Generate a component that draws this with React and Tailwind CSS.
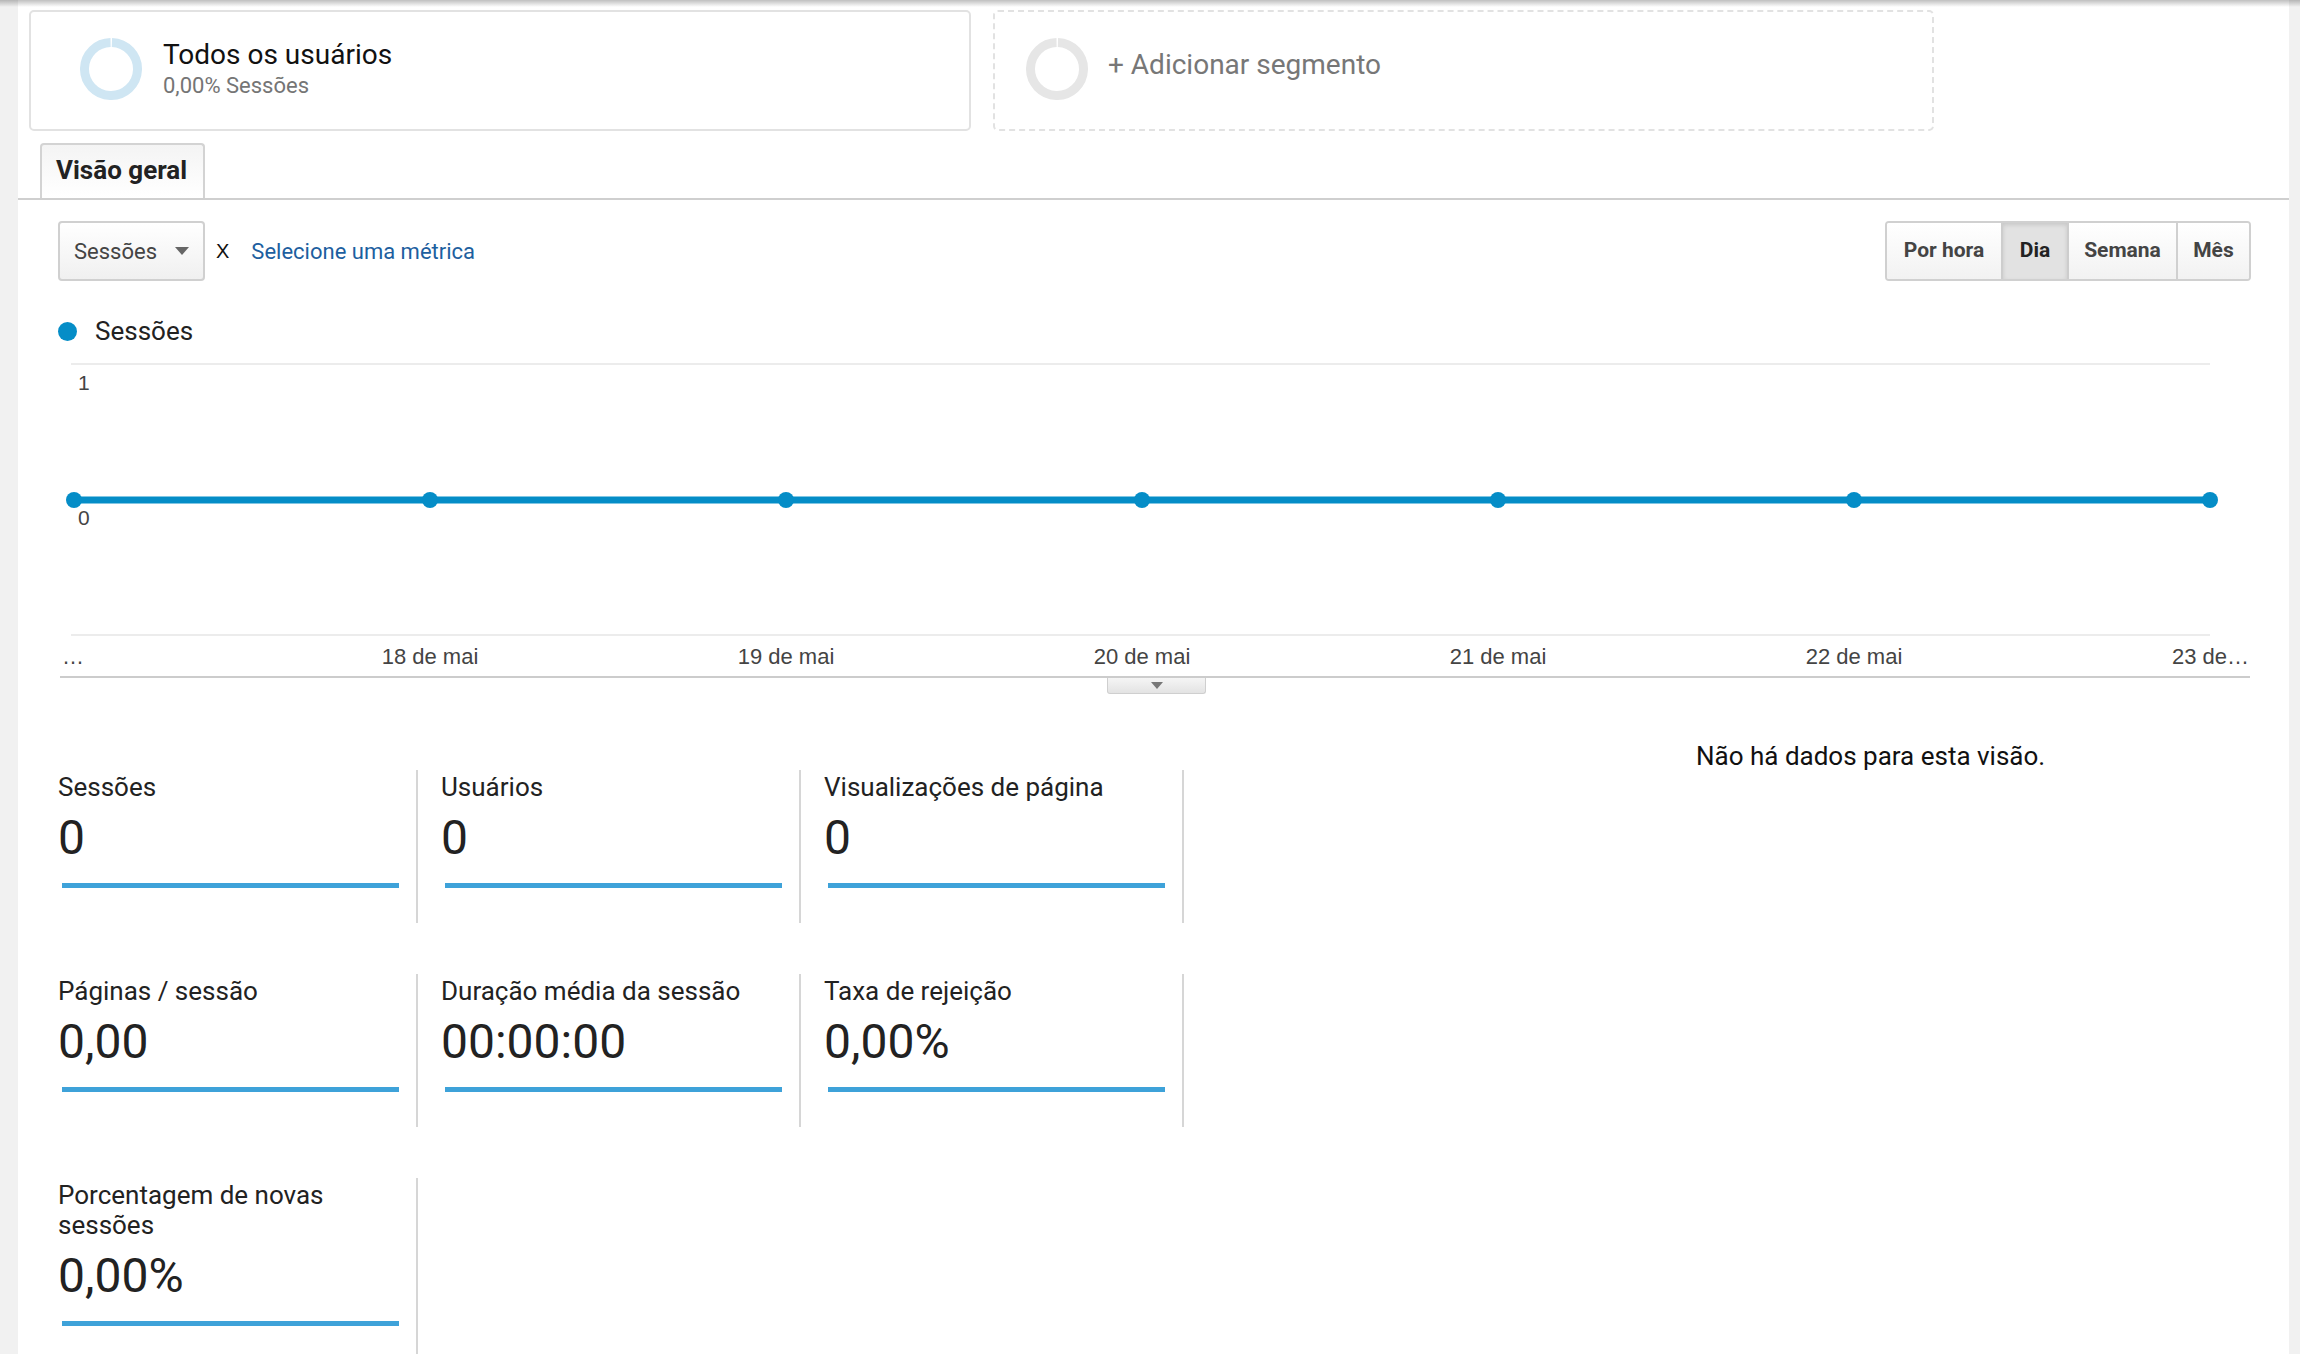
import React from 'react';

const DOTS = [0, 1, 2, 3, 4, 5, 6].map(i => 16 + i * 356);
const DAYS = ['18 de mai', '19 de mai', '20 de mai', '21 de mai', '22 de mai'];

const METRICS = [
    [
        { label: 'Sessões', value: '0' },
        { label: 'Usuários', value: '0' },
        { label: 'Visualizações de página', value: '0' },
    ],
    [
        { label: 'Páginas / sessão', value: '0,00' },
        { label: 'Duração média da sessão', value: '00:00:00' },
        { label: 'Taxa de rejeição', value: '0,00%' },
    ],
    [
        { label: 'Porcentagem de novas sessões', value: '0,00%' },
    ],
];

function Donut({ color }) {
    // full ring with a small notch at 12 o'clock
    const r = 26.5;
    const c = 2 * Math.PI * r;
    return (
        <svg width="62" height="62" viewBox="0 0 62 62" className="shrink-0">
            <circle
                cx="31"
                cy="31"
                r={r}
                fill="none"
                stroke={color}
                strokeWidth="9"
                strokeDasharray={`${c - 2.5} 2.5`}
                transform="rotate(-88 31 31)"
            />
        </svg>
    );
}

function MetricCell({ label, value }) {
    return (
        <div className="w-[383px] border-r-2 border-[#d6d6d6] pl-[23px] pt-[2px] pb-[35px]">
            <div className="max-w-[300px] text-[26px] leading-[30px] text-[#222]">{label}</div>
            <div className="mt-[12px] text-[48px] leading-[48px] text-[#222]">{value}</div>
            <div className="mt-[21px] ml-[4px] h-[5px] w-[337px] bg-[#3ea2d9]" />
        </div>
    );
}

export default function App() {
    return (
        <div className="relative flex min-h-[1354px] bg-[#f1f1f1] font-['Roboto',sans-serif]">
            {/* header shadow */}
            <div className="pointer-events-none absolute left-0 right-0 top-0 h-[7px] bg-gradient-to-b from-black/25 to-transparent" />

            <div className="w-[18px] shrink-0" />

            <div className="flex-1 bg-white">
                {/* Segments */}
                <div className="flex gap-[22px] pl-[11px] pt-[10px]">
                    <div className="flex h-[121px] w-[942px] items-start gap-[21px] rounded-[5px] border-2 border-[#e2e2e2] pl-[49px] pt-[26px]">
                        <Donut color="#cfe6f3" />
                        <div>
                            <div className="text-[28px] leading-[34px] text-[#111]">Todos os usuários</div>
                            <div className="mt-[1px] text-[22px] leading-[26px] text-[#757575]">0,00% Sessões</div>
                        </div>
                    </div>
                    <div className="flex h-[121px] w-[941px] items-start gap-[20px] rounded-[5px] border-2 border-dashed border-[#e2e2e2] pl-[31px] pt-[26px]">
                        <Donut color="#e6e6e6" />
                        <div className="mt-[10px] text-[28px] leading-[34px] text-[#777]">+ Adicionar segmento</div>
                    </div>
                </div>

                {/* Tab */}
                <div className="mt-[12px] flex border-b-2 border-[#cfcfcf] pl-[22px]">
                    <div className="w-[165px] rounded-t-[4px] border-2 border-b-0 border-[#d3d3d3] bg-gradient-to-b from-[#f4f4f4] to-white px-[14px] pb-[12px] pt-[9px] text-[26px] font-bold leading-[32px] text-[#222]">
                        Visão geral
                    </div>
                </div>

                <div className="pl-[40px] pr-[38px]">
                    {/* Controls */}
                    <div className="mt-[21px] flex h-[60px] items-center justify-between">
                        <div className="flex items-center">
                            <div className="flex h-[60px] w-[147px] items-center justify-between rounded-[4px] border-2 border-[#d0d0d0] bg-gradient-to-b from-white to-[#f0f0f0] pl-[14px] pr-[14px]">
                                <span className="text-[22px] text-[#444]">Sessões</span>
                                <svg width="14" height="8" viewBox="0 0 14 8">
                                    <path d="M0 0h14L7 8z" fill="#666" />
                                </svg>
                            </div>
                            <span className="ml-[11px] font-['Liberation_Sans',sans-serif] text-[20px] text-[#111]">X</span>
                            <span className="ml-[22px] text-[22px] text-[#1d5f9f]">Selecione uma métrica</span>
                        </div>
                        <div className="flex h-[60px] overflow-hidden rounded-[4px] border-2 border-[#d0d0d0] text-[21px] font-bold text-[#444]">
                            <div className="flex w-[114px] items-center justify-center bg-gradient-to-b from-white to-[#f2f2f2]">Por hora</div>
                            <div className="flex w-[68px] items-center justify-center border-x-2 border-[#cdcdcd] bg-[#e2e2e2] text-[#222] shadow-[inset_0_2px_4px_rgba(0,0,0,0.12)]">Dia</div>
                            <div className="flex w-[109px] items-center justify-center border-r-2 border-[#d0d0d0] bg-gradient-to-b from-white to-[#f2f2f2]">Semana</div>
                            <div className="flex w-[71px] items-center justify-center bg-gradient-to-b from-white to-[#f2f2f2]">Mês</div>
                        </div>
                    </div>

                    {/* Legend */}
                    <div className="mt-[34px] flex h-[32px] items-center gap-[18px]">
                        <div className="h-[19px] w-[19px] rounded-full bg-[#058dc7]" />
                        <span className="text-[26px] leading-[32px] text-[#222]">Sessões</span>
                    </div>

                    {/* Chart */}
                    <svg width="2193" height="326" className="mt-[3px] block font-['Liberation_Sans',sans-serif]">
                        <line x1="13" y1="14" x2="2152" y2="14" stroke="#ececec" strokeWidth="2" />
                        <line x1="13" y1="285" x2="2152" y2="285" stroke="#ececec" strokeWidth="2" />
                        <text x="20" y="40" fontSize="21" fill="#444">1</text>
                        <text x="20" y="175" fontSize="21" fill="#444">0</text>
                        <line x1="16" y1="150" x2="2152" y2="150" stroke="#058dc7" strokeWidth="7" />
                        {DOTS.map(x => (
                            <circle key={x} cx={x} cy="150" r="8" fill="#058dc7" />
                        ))}
                        <text x="4" y="314" fontSize="22" fill="#444">…</text>
                        {DAYS.map((d, i) => (
                            <text key={d} x={DOTS[i + 1]} y="314" fontSize="22" fill="#444" textAnchor="middle">{d}</text>
                        ))}
                        <text x="2191" y="314" fontSize="22" fill="#444" textAnchor="end">23 de…</text>
                    </svg>
                    <div className="ml-[2px] mr-[1px] border-t-2 border-[#cccccc]" />
                    <div className="flex justify-center pl-[4px]">
                        <div className="flex h-[16px] w-[99px] items-center justify-center rounded-b-[3px] border border-t-0 border-[#cfcfcf] bg-gradient-to-b from-[#f5f5f5] to-[#e3e3e3]">
                            <svg width="12" height="7" viewBox="0 0 12 7">
                                <path d="M0 0h12L6 7z" fill="#777" />
                            </svg>
                        </div>
                    </div>
                </div>

                {/* Metrics */}
                <div className="mt-[47px] flex items-start pl-[17px]">
                    <div className="mt-[29px] flex flex-col gap-[51px]">
                        {METRICS.map((row, i) => (
                            <div key={i} className="flex">
                                {row.map(m => (
                                    <MetricCell key={m.label} {...m} />
                                ))}
                            </div>
                        ))}
                    </div>
                    <div className="pl-[512px] text-[26px] leading-[30px] text-[#111]">Não há dados para esta visão.</div>
                </div>
            </div>

            <div className="w-[11px] shrink-0" />
        </div>
    );
}
